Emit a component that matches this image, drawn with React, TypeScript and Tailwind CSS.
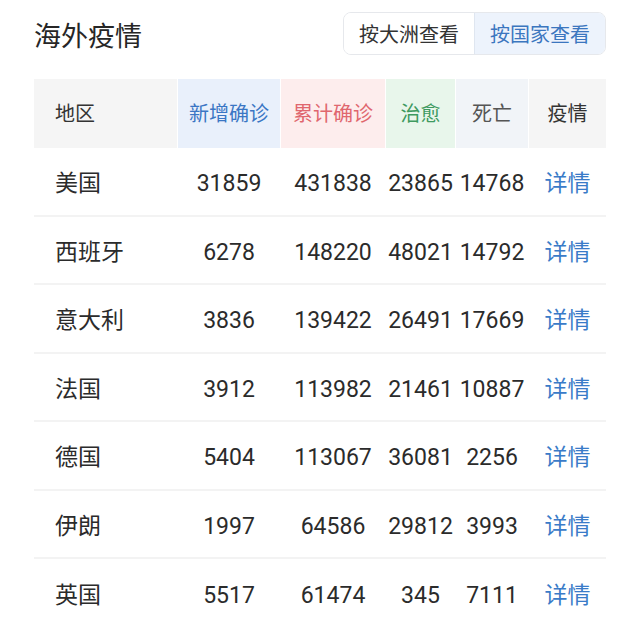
import React from 'react';

const rows = [
  ['美国', '31859', '431838', '23865', '14768'],
  ['西班牙', '6278', '148220', '48021', '14792'],
  ['意大利', '3836', '139422', '26491', '17669'],
  ['法国', '3912', '113982', '21461', '10887'],
  ['德国', '5404', '113067', '36081', '2256'],
  ['伊朗', '1997', '64586', '29812', '3993'],
  ['英国', '5517', '61474', '345', '7111'],
];

const cols = 'grid grid-cols-[143px_102px_104px_69px_72px_77px] gap-x-px';

export default function App() {
  return (
    <div
      className="w-[640px] h-[622px] overflow-hidden bg-white px-[34px] text-[#2b2b2b]"
      style={{ fontFamily: 'Roboto, "Noto Sans CJK SC", sans-serif' }}
    >
      <div className="flex items-center justify-between pt-[12px] h-[55px]">
        <h1 className="text-[27px] leading-none text-[#262626] mt-[8px]">海外疫情</h1>
        <div className="flex h-[43px] rounded-[8px] border border-[#e6e8ec] overflow-hidden text-[20px]">
          <div className="flex items-center px-[15px] pt-[2px] bg-white text-[#333]">按大洲查看</div>
          <div className="flex items-center px-[15px] pt-[2px] bg-[#edf3fc] text-[#3b76bf] border-l border-[#dfe6f0]">
            按国家查看
          </div>
        </div>
      </div>

      <div className={`${cols} mt-[24px] h-[69px] text-[20px]`}>
        <div className="flex items-center pl-[21px] bg-[#f5f5f5] text-[#333]">地区</div>
        <div className="flex items-center justify-center bg-[#e9f0fb] text-[#3a76c4]">新增确诊</div>
        <div className="flex items-center justify-center bg-[#fdeded] text-[#e0666e]">累计确诊</div>
        <div className="flex items-center justify-center bg-[#e8f6eb] text-[#3e9a5f]">治愈</div>
        <div className="flex items-center justify-center bg-[#f1f4f8] text-[#555]">死亡</div>
        <div className="flex items-center justify-center bg-[#f5f5f5] text-[#333]">疫情</div>
      </div>

      {rows.map((r, i) => (
        <div
          key={r[0]}
          className={`${cols} h-[68.5px] pt-[6px] text-[23px] ${i < rows.length - 1 ? 'border-b-2 border-[#f3f3f3]' : ''}`}
        >
          <div className="flex items-center pl-[21px]">{r[0]}</div>
          <div className="flex items-center justify-center">{r[1]}</div>
          <div className="flex items-center justify-center">{r[2]}</div>
          <div className="flex items-center justify-center">{r[3]}</div>
          <div className="flex items-center justify-center">{r[4]}</div>
          <div className="flex items-center justify-center text-[#3a7bc8]">详情</div>
        </div>
      ))}
    </div>
  );
}
